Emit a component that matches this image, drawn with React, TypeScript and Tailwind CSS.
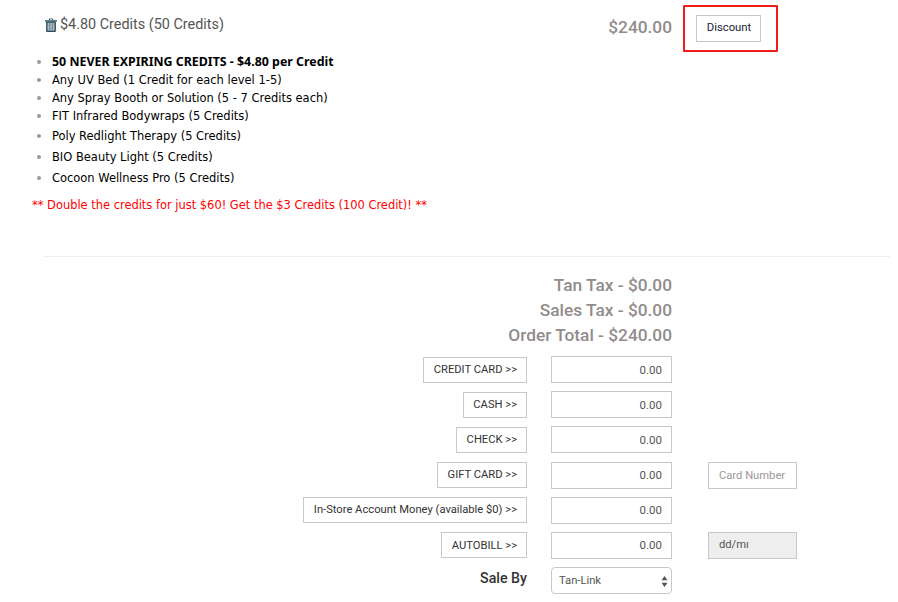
const btn = "h-[26px] pl-[9.5px] pr-[9px] pt-[1px] border border-[#c8c8c8] bg-white text-[11.2px] text-[#333] flex items-center font-['Roboto',sans-serif]";
const inputCls = "w-[121px] h-[27px] border border-[#c8c8c8] bg-white text-[11.5px] text-[#555] text-right pr-[9px] font-['Roboto',sans-serif] outline-none";

type Row = { label: string; extra?: "card" | "date" };
const rows: Row[] = [
  { label: "CREDIT CARD >>" },
  { label: "CASH >>" },
  { label: "CHECK >>" },
  { label: "GIFT CARD >>", extra: "card" },
  { label: "In-Store Account Money (available $0) >>" },
  { label: "AUTOBILL >>", extra: "date" },
];

function Trash() {
  return (
    <svg width="12" height="14" viewBox="0 0 13 15" className="mr-[3px]" fill="#2a4d5e">
      <rect x="0" y="2.4" width="13" height="1.4" />
      <path d="M4 2.4 L4.6 0.4 H8.4 L9 2.4 H7.9 L7.6 1.4 H5.4 L5.1 2.4Z" />
      <path d="M1.2 3.8 H11.8 V14 Q11.8 15 10.8 15 H2.2 Q1.2 15 1.2 14Z M2.9 5 V13.6 H3.9 V5Z M5 5 V13.6 H6 V5Z M7 5 V13.6 H8 V5Z M9.1 5 V13.6 H10.1 V5Z" fillRule="evenodd" />
    </svg>
  );
}

export default function App() {
  const item = "text-[12.75px] font-['DejaVu_Sans_Condensed','DejaVu_Sans',sans-serif] text-black";
  return (
    <div className="w-[898px] h-[602px] overflow-hidden bg-white relative font-['Roboto',sans-serif]">
      <div className="flex items-start h-[53px] pl-[45px]">
        <div className="flex items-center mt-[16px] text-[14.4px] text-[#555] leading-[17px]">
          <Trash />
          <span>$4.80 Credits (50 Credits)</span>
        </div>
        <div className="ml-auto text-[17.3px] font-medium text-[#918b8b] mt-[17px] leading-[21px]">$240.00</div>
        <div className="ml-[11px] mr-[120px] mt-[5px] w-[95px] h-[47px] border-2 border-[#f01c1c] rounded-[1px] flex items-center pl-[11px]">
          <button className="w-[65px] h-[27px] border border-[#c8c8c8] text-[11.3px] pl-[1px] text-[#223] bg-white">Discount</button>
        </div>
      </div>
      <ul className="pl-[52px] mt-0 list-disc marker:text-[#999]">
        <li className="text-[12.4px] font-['Noto_Sans',sans-serif] text-black font-bold h-[18px] leading-[18px]">50 NEVER EXPIRING CREDITS - $4.80 per Credit</li>
        <li className={`${item} h-[18px] leading-[18px]`}>Any UV Bed (1 Credit for each level 1-5)</li>
        <li className={`${item} h-[18px] leading-[18px]`}>Any Spray Booth or Solution (5 - 7 Credits each)</li>
        <li className={`${item} h-[19px] leading-[18px]`}>FIT Infrared Bodywraps (5 Credits)</li>
        <li className={`${item} h-[21px] leading-[20px]`}>Poly Redlight Therapy (5 Credits)</li>
        <li className={`${item} h-[21px] leading-[20px]`}>BIO Beauty Light (5 Credits)</li>
        <li className={`${item} h-[21px] leading-[20px]`}>Cocoon Wellness Pro (5 Credits)</li>
      </ul>
      <p className="pl-[32px] mt-[7px] text-[12.72px] leading-[18px] text-[#ff0000] font-['DejaVu_Sans_Condensed','DejaVu_Sans',sans-serif]">** Double the credits for just $60! Get the $3 Credits (100 Credit)! **</p>
      <div className="ml-[44px] mr-[8px] mt-[42px] border-t border-[#eeeeee]" />
      <div className="w-[672px] mt-[16px] text-right text-[17.3px] font-medium leading-[25px] text-[#918b8b]">
        <div>Tan Tax - $0.00</div>
        <div>Sales Tax - $0.00</div>
        <div>Order Total - $240.00</div>
      </div>
      <div className="mt-[8px] flex flex-col gap-[8.2px]">
        {rows.map((r) => (
          <div key={r.label} className="flex items-center h-[27px]">
            <div className="w-[527px] flex justify-end">
              <button className={btn}>{r.label}</button>
            </div>
            <input readOnly value="0.00" className={`${inputCls} ml-[24px]`} />
            {r.extra === "card" && (
              <input placeholder="Card Number" className="ml-[36px] w-[89px] h-[27px] border border-[#c8c8c8] px-[10px] text-[11.2px] placeholder:text-[#999] outline-none" />
            )}
            {r.extra === "date" && (
              <div className="ml-[36px] w-[89px] h-[27px] border border-[#c8c8c8] bg-[#eeeeee] pl-[10px] text-[11.2px] text-[#555] flex items-center">dd/mı</div>
            )}
          </div>
        ))}
        <div className="flex items-center h-[27px]">
          <div className="w-[527px] text-right text-[14.2px] font-medium leading-[20px] pb-[6px] text-[#333]">Sale By</div>
          <div className="ml-[24px] w-[121px] h-[27px] border border-[#c8c8c8] rounded-[4px] flex items-center justify-between pl-[7px] pr-[3px] pt-[1px] text-[11.2px] text-[#555]">
            <span>Tan-Link</span>
            <svg width="7" height="11" viewBox="0 0 7 11" fill="#555"><path d="M3.5 0 L6.5 4.3 H0.5Z M3.5 11 L6.5 6.7 H0.5Z" /></svg>
          </div>
        </div>
      </div>
    </div>
  );
}
